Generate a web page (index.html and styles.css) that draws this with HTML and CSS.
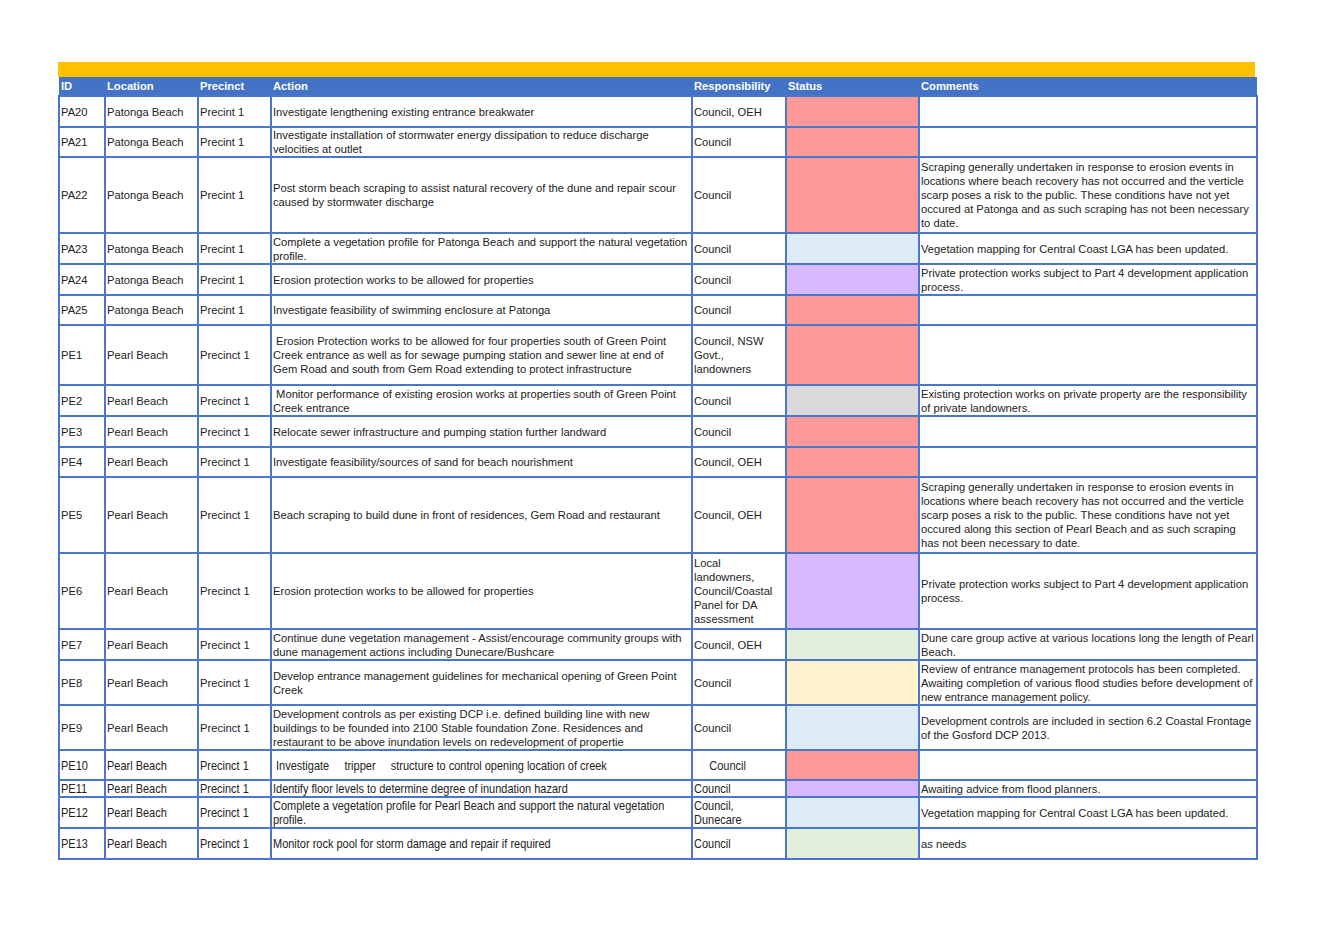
FILE: index.html
```html
<!DOCTYPE html>
<html>
<head>
<meta charset="utf-8">
<link rel="stylesheet" href="styles.css">
</head>
<body>
<div class="page">
  <div class="topbar"></div>
  <table class="grid">
    <colgroup>
      <col class="c-id"><col class="c-loc"><col class="c-pre"><col class="c-act"><col class="c-res"><col class="c-sta"><col class="c-com">
    </colgroup>
    <thead>
      <tr class="head">
        <th>ID</th><th>Location</th><th>Precinct</th><th>Action</th><th>Responsibility</th><th>Status</th><th>Comments</th>
      </tr>
    </thead>
    <tbody>
      <tr class="h31"><td>PA20</td><td>Patonga Beach</td><td>Precint 1</td><td>Investigate lengthening existing entrance breakwater</td><td>Council, OEH</td><td class="s-red"></td><td class="com"></td></tr>
      <tr class="h30"><td>PA21</td><td>Patonga Beach</td><td>Precint 1</td><td>Investigate installation of stormwater energy dissipation to reduce discharge velocities at outlet</td><td>Council</td><td class="s-red"></td><td class="com"></td></tr>
      <tr class="h76"><td>PA22</td><td>Patonga Beach</td><td>Precint 1</td><td>Post storm beach scraping to assist natural recovery of the dune and repair scour caused by stormwater discharge</td><td>Council</td><td class="s-red"></td><td class="com">Scraping generally undertaken in response to erosion events in locations where beach recovery has not occurred and the verticle scarp poses a risk to the public. These conditions have not yet occured at Patonga and as such scraping has not been necessary to date.</td></tr>
      <tr class="h31"><td>PA23</td><td>Patonga Beach</td><td>Precint 1</td><td>Complete a vegetation profile for Patonga Beach and support the natural vegetation profile.</td><td>Council</td><td class="s-blue"></td><td class="com">Vegetation mapping for Central Coast LGA has been updated.</td></tr>
      <tr class="h31"><td>PA24</td><td>Patonga Beach</td><td>Precint 1</td><td>Erosion protection works to be allowed for properties</td><td>Council</td><td class="s-purple"></td><td class="com">Private protection works subject to Part 4 development application process.</td></tr>
      <tr class="h30"><td>PA25</td><td>Patonga Beach</td><td>Precint 1</td><td>Investigate feasibility of swimming enclosure at Patonga</td><td>Council</td><td class="s-red"></td><td class="com"></td></tr>
      <tr class="h60"><td>PE1</td><td>Pearl Beach</td><td>Precinct 1</td><td>&nbsp;Erosion Protection works to be allowed for four properties south of Green Point Creek entrance as well as for sewage pumping station and sewer line at end of Gem Road and south from Gem Road extending to protect infrastructure</td><td>Council, NSW Govt., landowners</td><td class="s-red"></td><td class="com"></td></tr>
      <tr class="h31"><td>PE2</td><td>Pearl Beach</td><td>Precinct 1</td><td>&nbsp;Monitor performance of existing erosion works at properties south of Green Point Creek entrance</td><td>Council</td><td class="s-gray"></td><td class="com">Existing protection works on private property are the responsibility of private landowners.</td></tr>
      <tr class="h31"><td>PE3</td><td>Pearl Beach</td><td>Precinct 1</td><td>Relocate sewer infrastructure and pumping station further landward</td><td>Council</td><td class="s-red"></td><td class="com"></td></tr>
      <tr class="h30"><td>PE4</td><td>Pearl Beach</td><td>Precinct 1</td><td>Investigate feasibility/sources of sand for beach nourishment</td><td>Council, OEH</td><td class="s-red"></td><td class="com"></td></tr>
      <tr class="h76"><td>PE5</td><td>Pearl Beach</td><td>Precinct 1</td><td>Beach scraping to build dune in front of residences, Gem Road and restaurant</td><td>Council, OEH</td><td class="s-red"></td><td class="com">Scraping generally undertaken in response to erosion events in locations where beach recovery has not occurred and the verticle scarp poses a risk to the public. These conditions have not yet occured along this section of Pearl Beach and as such scraping has not been necessary to date.</td></tr>
      <tr class="h76"><td>PE6</td><td>Pearl Beach</td><td>Precinct 1</td><td>Erosion protection works to be allowed for properties</td><td>Local landowners, Council/Coastal Panel for DA assessment</td><td class="s-purple"></td><td class="com">Private protection works subject to Part 4 development application process.</td></tr>
      <tr class="h31"><td>PE7</td><td>Pearl Beach</td><td>Precinct 1</td><td>Continue dune vegetation management - Assist/encourage community groups with dune management actions including Dunecare/Bushcare</td><td>Council, OEH</td><td class="s-green"></td><td class="com">Dune care group active at various locations long the length of Pearl Beach.</td></tr>
      <tr class="h45"><td>PE8</td><td>Pearl Beach</td><td>Precinct 1</td><td>Develop entrance management guidelines for mechanical opening of Green Point Creek</td><td>Council</td><td class="s-yellow"></td><td class="com">Review of entrance management protocols has been completed. Awaiting completion of various flood studies before development of new entrance management policy.</td></tr>
      <tr class="h45"><td>PE9</td><td>Pearl Beach</td><td>Precinct 1</td><td>Development controls as per existing DCP i.e. defined building line with new buildings to be founded into 2100 Stable foundation Zone. Residences and restaurant to be above inundation levels on redevelopment of propertie</td><td>Council</td><td class="s-blue"></td><td class="com">Development controls are included in section 6.2 Coastal Frontage of the Gosford DCP 2013.</td></tr>
      <tr class="h30"><td><span class="nx">PE10</span></td><td><span class="nx">Pearl Beach</span></td><td><span class="nx">Precinct 1</span></td><td><span class="nx pre"> Investigate     tripper     structure to control opening location of creek</span></td><td><span class="nx pre">     Council</span></td><td class="s-red"></td><td class="com"></td></tr>
      <tr class="h17"><td><span class="nx">PE11</span></td><td><span class="nx">Pearl Beach</span></td><td><span class="nx">Precinct 1</span></td><td><span class="nx">Identify floor levels to determine degree of inundation hazard</span></td><td><span class="nx">Council</span></td><td class="s-purple"></td><td class="com">Awaiting advice from flood planners.</td></tr>
      <tr class="h31"><td><span class="nx">PE12</span></td><td><span class="nx">Pearl Beach</span></td><td><span class="nx">Precinct 1</span></td><td><span class="nx">Complete a vegetation profile for Pearl Beach and support the natural vegetation profile.</span></td><td><span class="nx">Council, Dunecare</span></td><td class="s-blue"></td><td class="com">Vegetation mapping for Central Coast LGA has been updated.</td></tr>
      <tr class="h31"><td><span class="nx">PE13</span></td><td><span class="nx">Pearl Beach</span></td><td><span class="nx">Precinct 1</span></td><td><span class="nx">Monitor rock pool for storm damage and repair if required</span></td><td><span class="nx">Council</span></td><td class="s-green"></td><td class="com">as needs</td></tr>
    </tbody>
  </table>
</div>
</body>
</html>
```
FILE: styles.css
```css
html, body {
  margin: 0;
  padding: 0;
  background: #ffffff;
}
body {
  font-family: "Liberation Sans", Arial, sans-serif;
  font-size: 11.2px;
  color: #222222;
}
.page {
  padding: 62px 0 0 58px;
  width: 1198px;
}
.topbar {
  height: 15px;
  width: 1197px;
  background: #ffc000;
}
.grid {
  border-collapse: collapse;
  table-layout: fixed;
  width: 1198px;
}
.c-id { width: 46px; }
.c-loc { width: 93px; }
.c-pre { width: 73px; }
.c-act { width: 421px; }
.c-res { width: 94px; }
.c-sta { width: 133px; }
.c-com { width: 338px; }

.head th {
  background: #4472c4;
  color: #ffffff;
  font-weight: bold;
  text-align: left;
  height: 18px;
  padding: 0 2px;
  border: 0;
  line-height: 14px;
}
.grid td {
  border: 2px solid #4a76cc;
  padding: 0 3px 0 1px;
  vertical-align: middle;
  line-height: 14px;
  overflow: visible;
}
.grid td.com {
  padding-right: 0;
}
.h17 td { height: 15px; }
.h30 td { height: 28px; }
.h31 td { height: 29px; }
.h45 td { height: 43px; }
.h60 td { height: 58px; }
.h76 td { height: 74px; }

.s-red { background: #ff9999; }
.s-blue { background: #ddebf7; }
.s-purple { background: #d9b8ff; }
.s-gray { background: #d9d9d9; }
.s-green { background: #e2efda; }
.s-yellow { background: #fff2cc; }

.nx {
  display: inline-block;
  width: 122%;
  font-size: 13.4px;
  line-height: 14px;
  transform: scaleX(0.82);
  transform-origin: 0 50%;
  vertical-align: middle;
}
.pre { white-space: pre; }
```
